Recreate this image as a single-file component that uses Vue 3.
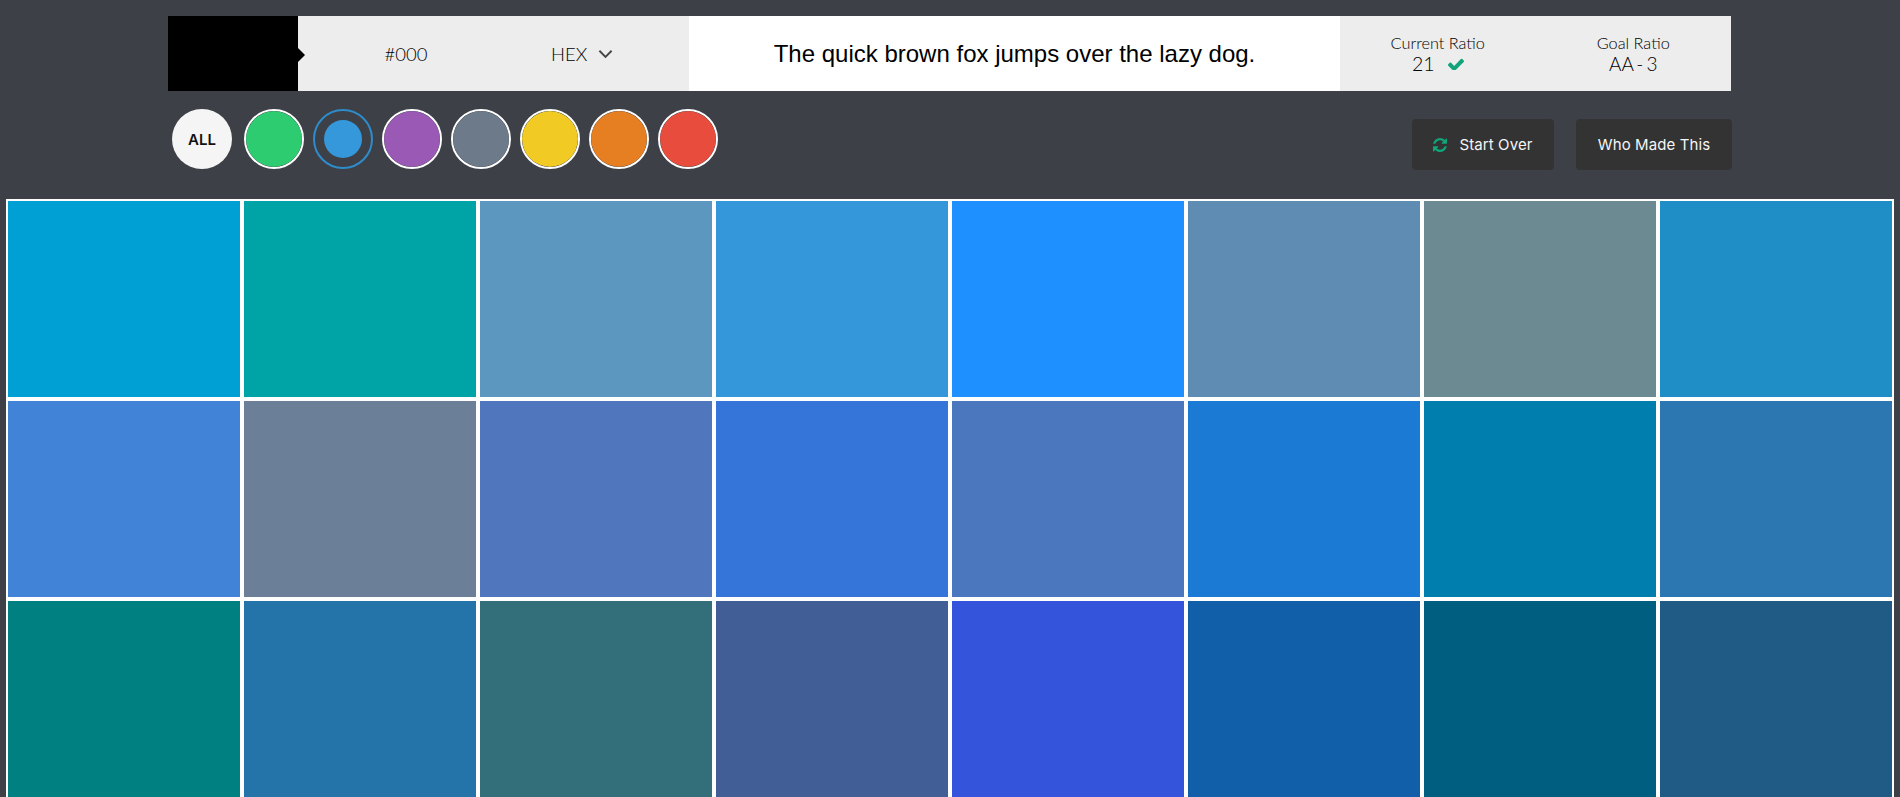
<script setup>
const swatchRows = [
  ['#009fd4', '#00a4a6', '#5c97bf', '#3397da', '#1e90ff', '#5f8cb3', '#6c8a91', '#1f8dc6'],
  ['#4183d7', '#6b7f99', '#5077be', '#3574d8', '#4b77be', '#1a7ad4', '#007fae', '#2c77b1'],
  ['#008080', '#2574a9', '#336e7b', '#415f96', '#3455db', '#125fa9', '#005f81', '#1f5b84'],
]
const swatches = swatchRows.flat()
const filters = ['#2ecc71', '#3498db', '#9b59b6', '#6c7a89', '#f1ca23', '#e67e22', '#e74c3c']
</script>

<template>
  <div class="page">
    <header class="bar">
      <div class="preview"></div>
      <div class="code">
        <span class="hex">#000</span>
        <span class="format">HEX
          <svg class="chevron" viewBox="0 0 16 10" width="15" height="10"><path d="M1.5 1.5l6.5 6.5 6.5-6.5" fill="none" stroke="#444" stroke-width="2"/></svg>
        </span>
      </div>
      <div class="sample">The quick brown fox jumps over the lazy dog.</div>
      <div class="ratios">
        <div class="ratio">
          <div class="label">Current Ratio</div>
          <div class="value">21
            <svg class="check" viewBox="121 290 1550 1140" width="16" height="12.5"><path d="M1671 566q0 40-28 68l-724 724-136 136q-28 28-68 28t-68-28l-136-136-362-362q-28-28-28-68t28-68l136-136q28-28 68-28t68 28l294 295 656-657q28-28 68-28t68 28l136 136q28 28 28 68z" fill="#11a47a"/></svg>
          </div>
        </div>
        <div class="ratio">
          <div class="label">Goal Ratio</div>
          <div class="value tight">AA - 3</div>
        </div>
      </div>
    </header>

    <div class="toolbar">
      <div class="filters">
        <button class="all">ALL</button>
        <button
          v-for="(c, i) in filters"
          :key="c"
          class="dot"
          :class="{ active: i === 1 }"
        ><span class="fill" :style="{ background: c }"></span></button>
      </div>
      <div class="actions">
        <button class="action start">
          <svg class="refresh" viewBox="128 128 1536 1536" width="14" height="14"><path d="M1639 1056q0 5-1 7-64 268-268 434.5t-478 166.5q-146 0-282.5-55t-243.5-157l-129 129q-19 19-45 19t-45-19-19-45v-448q0-26 19-45t45-19h448q26 0 45 19t19 45-19 45l-137 137q71 66 161 102t187 36q134 0 250-65t186-179q11-17 53-117 8-23 30-23h192q13 0 22.5 9.5t9.5 22.5zm25-800v448q0 26-19 45t-45 19h-448q-26 0-45-19t-19-45 19-45l138-138q-148-137-349-137-134 0-250 65t-186 179q-11 17-53 117-8 23-30 23h-199q-13 0-22.5-9.5t-9.5-22.5v-7q65-268 270-434.5t480-166.5q146 0 284 55.5t245 156.5l130-129q19-19 45-19t45 19 19 45z" fill="#11a47a"/></svg>
          Start Over
        </button>
        <button class="action who">Who Made This</button>
      </div>
    </div>

    <main class="grid">
      <div v-for="(c, i) in swatches" :key="i" class="swatch" :style="{ background: c }"></div>
    </main>
  </div>
</template>

<style>
html, body { margin: 0; background: #3d4047; overflow: hidden; }
</style>

<style scoped>
.page {
  height: 797px;
  overflow: hidden;
  background: #3d4047;
  padding-top: 16px;
  box-sizing: border-box;
}
.bar {
  display: flex;
  width: 1563px;
  height: 75px;
  margin-left: 168px;
  background: #ededed;
  font-family: Lato, sans-serif;
  font-weight: 300;
  color: #000;
}
.preview {
  position: relative;
  flex: none;
  width: 130px;
  background: #000;
}
.preview::after {
  content: '';
  position: absolute;
  left: 100%;
  top: 32px;
  border-left: 7px solid #000;
  border-top: 7.5px solid transparent;
  border-bottom: 7.5px solid transparent;
}
.code {
  flex: none;
  display: flex;
  align-items: center;
  width: 391px;
  font-size: 18.5px;
}
.hex { width: 216px; text-align: center; }
.format { display: flex; align-items: center; gap: 11px; margin-left: 37px; }
.sample {
  flex: none;
  width: 651px;
  background: #fff;
  color: #000;
  display: flex;
  align-items: center;
  justify-content: center;
  font: 400 24px "Liberation Sans", Arial, sans-serif;
}
.ratios {
  flex: 1;
  display: flex;
}
.ratio {
  flex: 1;
  padding-top: 17px;
  text-align: center;
}
.label { font-size: 16.3px; line-height: 20px; }
.value {
  font-size: 19.5px;
  line-height: 22px;
  display: flex;
  justify-content: center;
  align-items: center;
  gap: 13px;
}
.value.tight { font-size: 19px; word-spacing: -2px; }
.toolbar {
  display: flex;
  justify-content: space-between;
  height: 108px;
  margin-left: 172px;
  width: 1560px;
}
.filters {
  display: flex;
  gap: 9px;
  padding-top: 18px;
  align-items: flex-start;
}
.all {
  width: 60px;
  height: 60px;
  margin-right: 3px;
  border: 0;
  border-radius: 50%;
  background: #f5f5f5;
  color: #111;
  font: 600 15px Inter, sans-serif;
  padding: 0;
}
.dot {
  width: 60px;
  height: 60px;
  border: 2px solid #fff;
  border-radius: 50%;
  padding: 0;
  background: none;
  display: block;
  overflow: hidden;
}
.fill {
  display: block;
  width: 100%;
  height: 100%;
  border-radius: 50%;
}
.dot.active {
  border-color: #2f8ccb;
  padding: 9px;
}
.actions {
  display: flex;
  gap: 22px;
  padding-top: 28px;
  align-items: flex-start;
}
.action {
  height: 51px;
  padding: 0;
  border: 0;
  border-radius: 4px;
  background: #333;
  color: #f5f5f5;
  font: 400 15px Inter, sans-serif;
  letter-spacing: 0.1px;
  display: flex;
  align-items: center;
  justify-content: center;
  gap: 12px;
}
.action.start { width: 142px; }
.action.who { width: 156px; }
.grid {
  display: grid;
  grid-template-columns: repeat(8, 236px);
  grid-auto-rows: 200px;
  margin-left: 6px;
}
.swatch {
  border: 2px solid #fff;
  box-sizing: border-box;
}
</style>
